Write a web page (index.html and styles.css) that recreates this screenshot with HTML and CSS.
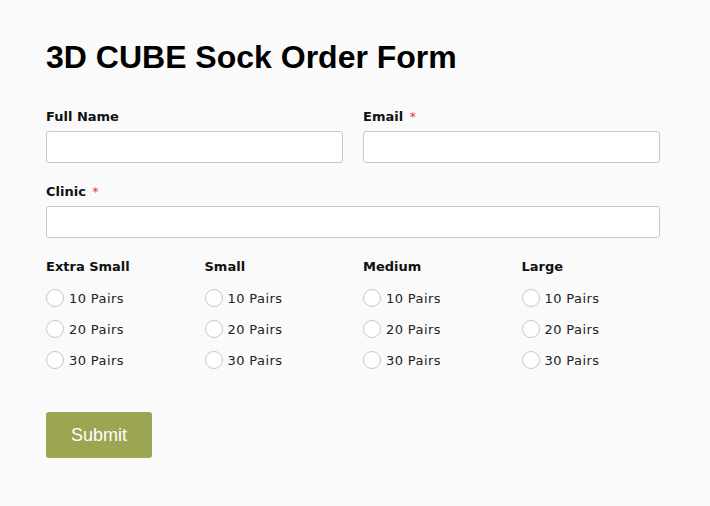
FILE: index.html
```html
<!DOCTYPE html>
<html>
<head>
<meta charset="utf-8">
<link rel="stylesheet" href="styles.css">
</head>
<body>
<div class="page">
  <h1 class="title">3D CUBE Sock Order Form</h1>
  <div class="row two">
    <div class="field">
      <div class="label">Full Name</div>
      <div class="input"></div>
    </div>
    <div class="field">
      <div class="label">Email <span class="req">*</span></div>
      <div class="input"></div>
    </div>
  </div>
  <div class="row">
    <div class="field">
      <div class="label">Clinic <span class="req">*</span></div>
      <div class="input"></div>
    </div>
  </div>
  <div class="row four">
    <div class="group">
      <div class="label">Extra Small</div>
      <div class="opt"><span class="radio"></span><span>10 Pairs</span></div>
      <div class="opt"><span class="radio"></span><span>20 Pairs</span></div>
      <div class="opt"><span class="radio"></span><span>30 Pairs</span></div>
    </div>
    <div class="group">
      <div class="label">Small</div>
      <div class="opt"><span class="radio"></span><span>10 Pairs</span></div>
      <div class="opt"><span class="radio"></span><span>20 Pairs</span></div>
      <div class="opt"><span class="radio"></span><span>30 Pairs</span></div>
    </div>
    <div class="group">
      <div class="label">Medium</div>
      <div class="opt"><span class="radio"></span><span>10 Pairs</span></div>
      <div class="opt"><span class="radio"></span><span>20 Pairs</span></div>
      <div class="opt"><span class="radio"></span><span>30 Pairs</span></div>
    </div>
    <div class="group">
      <div class="label">Large</div>
      <div class="opt"><span class="radio"></span><span>10 Pairs</span></div>
      <div class="opt"><span class="radio"></span><span>20 Pairs</span></div>
      <div class="opt"><span class="radio"></span><span>30 Pairs</span></div>
    </div>
  </div>
  <div class="actions">
    <button class="submit">Submit</button>
  </div>
</div>
</body>
</html>
```

FILE: styles.css
```css
html, body {
  margin: 0;
  padding: 0;
  background: #fafafa;
}
.page {
  width: 614px;
  padding: 38px 0 0 46px;
}
.title {
  margin: 0;
  font-family: "Liberation Sans", Arial, sans-serif;
  font-weight: bold;
  font-size: 32px;
  line-height: 38px;
  color: #000;
}
.row {
  margin-top: 21px;
}
.row.two {
  margin-top: 33px;
  display: grid;
  grid-template-columns: 1fr 1fr;
  column-gap: 20px;
}
.row.four {
  display: grid;
  grid-template-columns: repeat(4, 1fr);
  column-gap: 20px;
}
.label {
  font-family: "DejaVu Sans", Verdana, sans-serif;
  font-weight: bold;
  font-size: 13px;
  line-height: 16px;
  color: #111;
}
.req {
  color: #e0393e;
  font-weight: normal;
  font-size: 12px;
  margin-left: 2px;
}
.input {
  margin-top: 6px;
  height: 30px;
  background: #fff;
  border: 1px solid #c8c8c8;
  border-radius: 3px;
}
.opt {
  display: flex;
  align-items: center;
  margin-top: 13px;
  height: 18px;
  font-family: "DejaVu Sans", Verdana, sans-serif;
  font-size: 13px;
  letter-spacing: 0.4px;
  color: #222;
}
.group .label + .opt {
  margin-top: 14px;
}
.radio {
  width: 16px;
  height: 16px;
  border: 1px solid #c8c8c8;
  border-radius: 50%;
  background: #fff;
  margin-right: 5px;
  flex: none;
}
.actions {
  margin-top: 43px;
}
.submit {
  width: 106px;
  height: 46px;
  border: none;
  border-radius: 3px;
  background: #9ca552;
  color: #fff;
  font-family: "Liberation Sans", Arial, sans-serif;
  font-size: 18px;
  padding: 0;
}
```
